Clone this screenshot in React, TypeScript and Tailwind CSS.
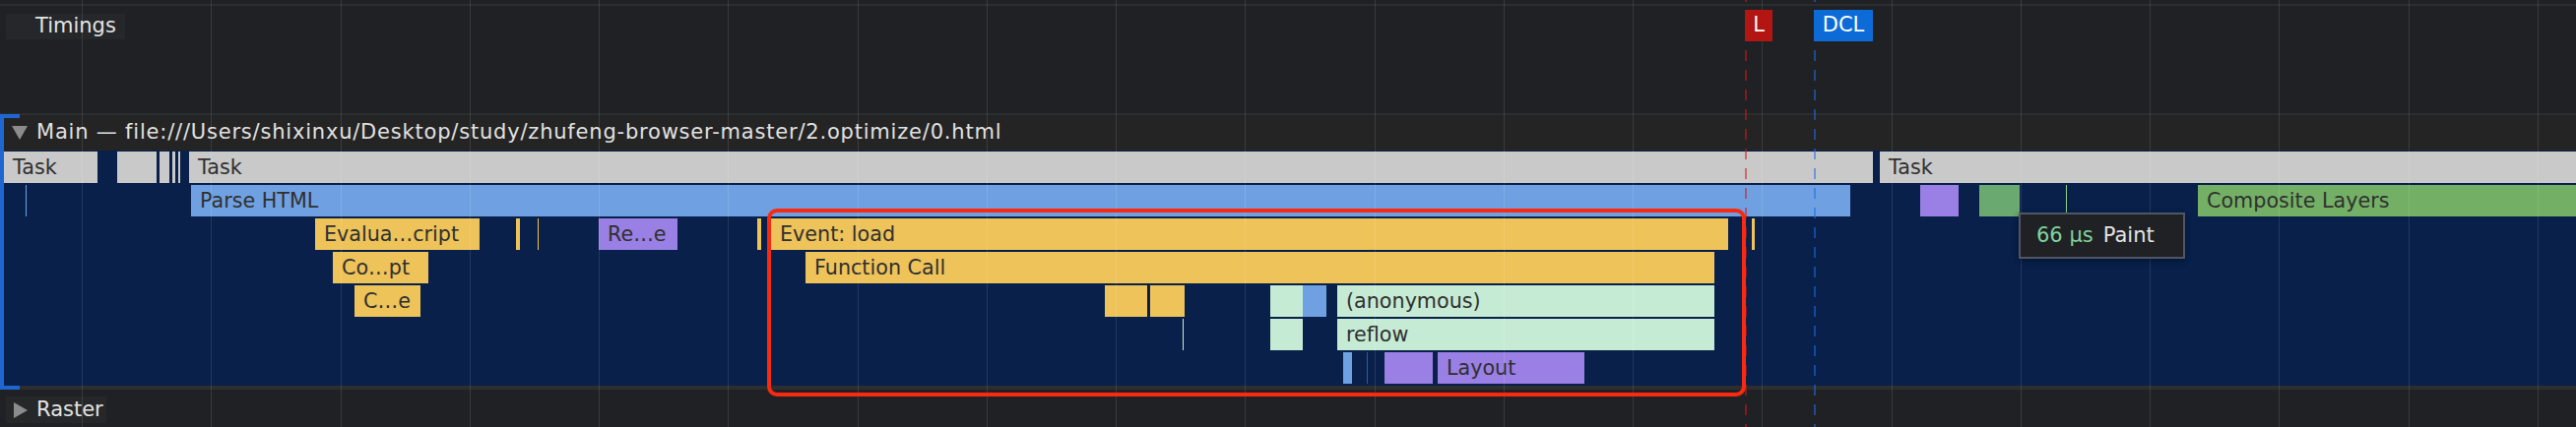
import React from 'react';

type Bar = { x: number; end: number; color: string; label?: string };

const GRID = Array.from({ length: 20 }, (_, i) => 83 + i * 131.25);

const YELLOW = 'bg-[#eec35a]';
const GRAY = 'bg-[#c9c9c9]';
const BLUE = 'bg-[#6fa1e2]';
const PURPLE = 'bg-[#9a7fe4]';
const MINT = 'bg-[#c6ebd5]';

const ROWS: Bar[][] = [
  [
    { x: 4, end: 99, color: GRAY, label: 'Task' },
    { x: 119, end: 159, color: GRAY },
    { x: 162, end: 172, color: GRAY },
    { x: 175, end: 178, color: GRAY },
    { x: 181, end: 183, color: GRAY },
    { x: 192, end: 1902, color: GRAY, label: 'Task' },
    { x: 1909, end: 2616, color: GRAY, label: 'Task' },
  ],
  [
    { x: 26, end: 27, color: BLUE },
    { x: 194, end: 1879, color: BLUE, label: 'Parse HTML' },
    { x: 1950, end: 1989, color: PURPLE },
    { x: 2010, end: 2051, color: 'bg-[#6aa970]' },
    { x: 2098, end: 2099, color: 'bg-[#8fd18a]' },
    { x: 2232, end: 2616, color: 'bg-[#73b065]', label: 'Composite Layers' },
  ],
  [
    { x: 320, end: 487, color: YELLOW, label: 'Evalua…cript' },
    { x: 524, end: 528, color: YELLOW },
    { x: 546, end: 547, color: YELLOW },
    { x: 608, end: 688, color: PURPLE, label: 'Re…e' },
    { x: 769, end: 773, color: YELLOW },
    { x: 783, end: 1755, color: YELLOW, label: 'Event: load' },
    { x: 1779, end: 1782, color: YELLOW },
  ],
  [
    { x: 338, end: 435, color: YELLOW, label: 'Co…pt' },
    { x: 818, end: 1741, color: YELLOW, label: 'Function Call' },
  ],
  [
    { x: 360, end: 427, color: YELLOW, label: 'C…e' },
    { x: 1122, end: 1165, color: YELLOW },
    { x: 1168, end: 1203, color: YELLOW },
    { x: 1290, end: 1323, color: MINT },
    { x: 1323, end: 1347, color: BLUE },
    { x: 1358, end: 1741, color: MINT, label: '(anonymous)' },
  ],
  [
    { x: 1201, end: 1202, color: MINT },
    { x: 1290, end: 1323, color: MINT },
    { x: 1358, end: 1741, color: MINT, label: 'reflow' },
  ],
  [
    { x: 1364, end: 1373, color: BLUE },
    { x: 1388, end: 1389, color: 'bg-[#2f5c9e]' },
    { x: 1406, end: 1455, color: PURPLE },
    { x: 1460, end: 1609, color: PURPLE, label: 'Layout' },
  ],
];

// one row of the flame chart; bars sit at their time offsets
function TrackRow({ bars }: { bars: Bar[] }) {
  return (
    <div className="relative h-[32px]">
      {bars.map((b, i) => (
        <div
          key={i}
          className={`absolute top-0 h-[32px] overflow-hidden whitespace-nowrap text-[20.7px] leading-[32px] text-[#303030] ${b.color} ${b.label ? 'pl-[9px]' : ''}`}
          style={{ left: b.x, width: b.end - b.x }}
        >
          {b.label}
        </div>
      ))}
    </div>
  );
}

function Caret({ open }: { open?: boolean }) {
  return open ? (
    <svg width="16" height="14" viewBox="0 0 16 14" className="shrink-0">
      <polygon points="0,0 16,0 8,14" fill="#8c8c8c" />
    </svg>
  ) : (
    <svg width="14" height="16" viewBox="0 0 14 16" className="shrink-0">
      <polygon points="0,0 14,8 0,16" fill="#8c8c8c" />
    </svg>
  );
}

export default function App() {
  return (
    <div className="relative h-[434px] w-[2616px] overflow-hidden bg-[#202124] font-['DejaVu_Sans',sans-serif]">
      <div className="h-[4px]" />
      <div className="h-[2px] bg-[#2c2d30]" />

      {/* Timings */}
      <div className="h-[109px] pl-[6px] pt-[8px]">
        <div className="flex h-[26px] w-[121px] items-center bg-[#25272a] pl-[30px] text-[21px] text-[#e3e3e3]">
          Timings
        </div>
      </div>
      <div className="h-[2px] bg-[#2c2d30]" />

      {/* Main track, with its blue selection bracket */}
      <div className="relative">
        <div className="flex h-[36px] items-center gap-[9px] bg-[#242424] pl-[12px] text-[21px] text-[#e0e0e0]">
          <Caret open />
          <span className="whitespace-nowrap tracking-[0.8px]">
            Main — file:///Users/shixinxu/Desktop/study/zhufeng-browser-master/2.optimize/0.html
          </span>
        </div>
        <div className="flex h-[239px] flex-col gap-[2px] bg-[#08204a] pt-[1px]">
          {ROWS.map((bars, i) => (
            <TrackRow key={i} bars={bars} />
          ))}
        </div>
        <div className="h-[4px] bg-[#2d2e30]" />

        <div className="absolute -top-[1px] bottom-0 left-0 w-[4px] bg-[#1f66d1]" />
        <div className="absolute -top-[1px] left-0 h-[4px] w-[20px] bg-[#1f66d1]" />
        <div className="absolute bottom-0 left-0 h-[4px] w-[20px] bg-[#1f66d1]" />
      </div>

      {/* Raster */}
      <div className="h-[38px] pl-[6px] pt-[7px]">
        <div className="flex h-[27px] w-[102px] items-center gap-[9px] bg-[#262729] pl-[8px] text-[21px] text-[#e3e3e3]">
          <Caret />
          Raster
        </div>
      </div>

      {/* grid + marker lines */}
      <svg className="pointer-events-none absolute inset-0" width="2616" height="434">
        {GRID.map((x) => (
          <line key={x} x1={Math.round(x) + 0.5} x2={Math.round(x) + 0.5} y1="0" y2="434" stroke="rgba(255,255,255,0.11)" strokeWidth="1" />
        ))}
        <line x1="1773" x2="1773" y1="-9" y2="434" stroke="rgba(205,25,25,0.55)" strokeWidth="2" strokeDasharray="11 9" />
        <line x1="1843" x2="1843" y1="-9" y2="434" stroke="rgba(30,110,230,0.55)" strokeWidth="2" strokeDasharray="11 9" />
      </svg>

      {/* timing markers, above their dashed lines */}
      <div className="pointer-events-none absolute left-[1772px] top-[10px] flex h-[32px] w-[28px] items-center justify-center bg-[#b31513] text-[21px] text-white">
        L
      </div>
      <div className="pointer-events-none absolute left-[1842px] top-[10px] flex h-[32px] w-[60px] items-center justify-center bg-[#0c6bd6] text-[21px] text-white">
        DCL
      </div>

      {/* highlight */}
      <div className="absolute left-[779px] top-[212px] h-[191px] w-[994px] rounded-[10px] border-[4px] border-[#fa2a10]" />

      {/* tooltip */}
      <div className="absolute left-[2050px] top-[216px] flex h-[47px] w-[169px] items-center gap-[10px] border-2 border-[#4f5666] bg-[#202124] pl-[16px] text-[21px] shadow-[0_2px_6px_rgba(0,0,0,0.4)]">
        <span className="text-[#7fd39b]">66 μs</span>
        <span className="text-[#e3e3e3]">Paint</span>
      </div>
    </div>
  );
}
